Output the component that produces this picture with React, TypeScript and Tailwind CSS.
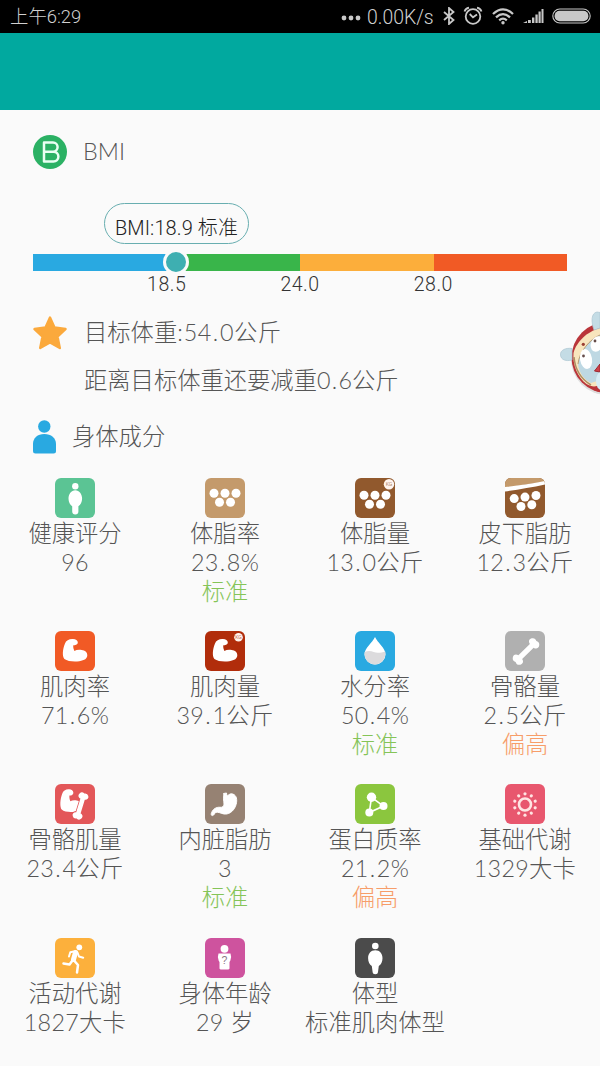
import { Fragment } from 'react';
import type { ReactNode } from 'react';

type Status = 'normal' | 'high';

interface Metric {
  name: string;
  value: string;
  status?: Status;
  tile: string;
  icon: ReactNode;
}

const ARM = 'M10 12.5C11 9.4 14.5 7.800 18 8.1c2.800.2 4.700 1.400 4.800 3.200.1 1.700-1.300 2.700-3 2.900l-1.500.1c-.3 2 .3 4.100 1.100 5.600 1.900-1 4.500-1.300 7.300-.8 3.300.5 5.500 2.100 5.600 5 .1 3.600-2.700 5.400-8 6.100-5.500.7-11.900.1-14.900-2.200C7.100 25.500 7.500 18 10 12.500Z';

const Dots = ({ points, r = 4.5 }: { points: number[][]; r?: number }) => (
  <g>
    {points.map(([x, y]) => (
      <circle key={`${x}-${y}`} cx={x} cy={y} r={r} />
    ))}
  </g>
);

const KgBadge = ({ color, cx, cy, r }: { color: string; cx: number; cy: number; r: number }) => (
  <g>
    <circle cx={cx} cy={cy} r={r} fill="#fff4ee" />
    <text x={cx} y={cy + 2} textAnchor="middle" fontSize="5.2" fontFamily="Roboto" fill={color}>KG</text>
  </g>
);

const Bone = () => (
  <path d="M-9.500-3.800A2.900 2.900 0 0 0-10.500 0 2.900 2.900 0 0 0-9.500 3.800C-7.500 5-6 3.500-5.800 1.900H5.800C6 3.500 7.500 5 9.500 3.800A2.900 2.900 0 0 0 10.500 0 2.900 2.900 0 0 0 9.500-3.800C7.500-5 6-3.500 5.800-1.900H-5.800C-6-3.500-7.500-5-9.500-3.800Z" />
);

// Gives the decimal point a little more room than Lato does
const Decimal = ({ children }: { children: string }) => (
  <>
    {children.split('.').map((part, i) => (
      <Fragment key={i}>
        {i > 0 && <span className="pr-[1.4px] pl-[1.2px]">.</span>}
        {part}
      </Fragment>
    ))}
  </>
);

const metrics: Metric[] = [
  {
    name: '健康评分',
    value: '96',
    tile: 'bg-[#5bc494]',
    icon: (
      <>
        <circle cx="20.300" cy="8.300" r="3.200" />
        <path d="M20.300 12.300c4 0 6.800 3.700 6.800 8.500 0 3.200-1.600 6-3.700 7.500V33.500c0 2-1.200 3-3.100 3s-3.100-1-3.100-3V28.300c-2.100-1.500-3.700-4.300-3.700-7.500 0-4.800 2.800-8.500 6.800-8.500Z" />
      </>
    ),
  },
  {
    name: '体脂率',
    value: '23.8%',
    status: 'normal',
    tile: 'bg-[#c49a6b]',
    icon: <Dots points={[[9, 15.2], [20, 15.2], [31, 15.2], [14.5, 24.3], [25.5, 24.3]]} />,
  },
  {
    name: '体脂量',
    value: '13.0公斤',
    tile: 'bg-[#91592d]',
    icon: (
      <>
        <Dots points={[[9, 17.2], [20, 17.2], [31, 17.2], [14.5, 26.3], [25.5, 26.3]]} />
        <KgBadge color="#91592d" cx={34} cy={6.3} r={5.2} />
      </>
    ),
  },
  {
    name: '皮下脂肪',
    value: '12.3公斤',
    tile: 'bg-[#91592d]',
    icon: (
      <>
        <path d="M0 0H40V4Q20 6 0 10Z" fill="#c49a6b" />
        <path d="M0 9C13 7.500 27 6 40 3V6.500C27 9.500 13 11.500 0 13.500Z" />
        <Dots points={[[9.2, 20.6], [20, 19.1], [31, 17.5], [16, 28.5], [26.8, 26.8]]} />
      </>
    ),
  },
  { name: '肌肉率', value: '71.6%', tile: 'bg-[#f15a25]', icon: <path d={ARM} /> },
  {
    name: '肌肉量',
    value: '39.1公斤',
    tile: 'bg-[#b12d0b]',
    icon: (
      <>
        <path d={ARM} />
        <KgBadge color="#b12d0b" cx={33.5} cy={6.3} r={4.3} />
      </>
    ),
  },
  {
    name: '水分率',
    value: '50.4%',
    status: 'normal',
    tile: 'bg-[#29a9e1]',
    icon: (
      <>
        <path d="M20 6C17.500 11.500 9.500 17 9.500 23.500a10.500 10 0 0 0 21 0C30.500 17 22.500 11.500 20 6Z" />
        <path d="M9.700 21c3-1.300 6-1.200 9 0 3.500 1.400 8 .5 11.600-.6.9 7.500-4.300 13.100-10.300 13.100S8.500 28 9.700 21Z" fill="#dcdbdd" />
      </>
    ),
  },
  {
    name: '骨骼量',
    value: '2.5公斤',
    status: 'high',
    tile: 'bg-[#b0b0b0]',
    icon: (
      <g transform="translate(21 20.5) rotate(-45) scale(1.4)">
        <Bone />
      </g>
    ),
  },
  {
    name: '骨骼肌量',
    value: '23.4公斤',
    tile: 'bg-[#e35759]',
    icon: (
      <>
        <path d={ARM} transform="translate(-1.5 -3) scale(.87 1.02)" />
        <g transform="translate(25.5 22) rotate(-73) scale(1.24 1.2)" stroke="#e35759" strokeWidth="1.3" paintOrder="stroke">
          <Bone />
        </g>
      </>
    ),
  },
  {
    name: '内脏脂肪',
    value: '3',
    status: 'normal',
    tile: 'bg-[#968273]',
    icon: (
      <path
        d="M18.500 9.500 21.500 9c.2 1.500.4 2.300 1.300 2.700 1.700-2 4.200-2.500 6.400-1 2.900 2 3.200 7 1.300 11.500-2.300 5.600-7.300 8.700-12 7.700-3.300-.8-5.700-2.300-7.700-1.500-1.600.8-1.300 2.700-3.300 3.200-1.500.1-1.500-1.800-.9-3.100 1.500-3.500 4.800-5.600 8.400-5.200 2.400.3 3.700-1 4-3.100.3-2.200-.8-3.700-.5-6 .1-1.500.5-3 0-4.700Z"
        stroke="#fff"
        strokeWidth="1"
      />
    ),
  },
  {
    name: '蛋白质率',
    value: '21.2%',
    status: 'high',
    tile: 'bg-[#8bc63e]',
    icon: (
      <>
        <path d="M16.500 13.300 28.500 22 14.300 28.600Z" fill="none" stroke="#fff" strokeWidth="1.600" />
        <circle cx="16.500" cy="13.300" r="4.700" />
        <circle cx="28.500" cy="22" r="4" />
        <circle cx="14.300" cy="28.600" r="4" />
      </>
    ),
  },
  {
    name: '基础代谢',
    value: '1329大卡',
    tile: 'bg-[#e8576e]',
    icon: (
      <g fill="#ffe4e2">
        <circle cx="20" cy="20.500" r="6" fill="none" stroke="#ffe4e2" strokeWidth="2.600" />
        {[0, 36, 72, 108, 144, 180, 216, 252, 288, 324].map((a) => (
          <circle key={a} cx="20" cy="9.800" r="1.600" transform={`rotate(${a} 20 20.500)`} />
        ))}
      </g>
    ),
  },
  {
    name: '活动代谢',
    value: '1827大卡',
    tile: 'bg-[#fcb03c]',
    icon: (
      <g fill="none" stroke="#fff" strokeLinecap="round" strokeLinejoin="round">
        <circle cx="24.300" cy="9.300" r="2.900" fill="#fff" stroke="none" />
        <path d="M20.500 14.500 18.500 21.500" strokeWidth="5" />
        <path d="M20 13.300 15.300 14.300 14 18.500M22.500 14.500 24 18.500 28.200 19.800" strokeWidth="2" />
        <path d="M19 22.500 23 27 22 34.500M17.500 22.500 14.500 26.500 8.500 25.500" strokeWidth="2.500" />
      </g>
    ),
  },
  {
    name: '身体年龄',
    value: '29 岁',
    tile: 'bg-[#ce539e]',
    icon: (
      <>
        <circle cx="19.500" cy="10.800" r="3.900" />
        <path d="M13.500 15.500H25.500Q26.800 18.500 25.300 22.800L24.500 24V30.500Q24.300 31.500 23 31.500H16Q14.700 31.500 14.500 30.500V24L13.700 22.800Q12.200 18.500 13.500 15.500Z" />
        <text x="19.500" y="25.500" textAnchor="middle" fontSize="10.500" fontFamily="Liberation Sans" fill="#8b777f">?</text>
      </>
    ),
  },
  {
    name: '体型',
    value: '标准肌肉体型',
    tile: 'bg-[#4b4b4b]',
    icon: (
      <>
        <circle cx="20.300" cy="8" r="3.300" />
        <path d="M20.300 12.300c4.500 0 7.200 3.400 7.200 8 0 3.500-1.500 6.400-3.700 7.600L23 34c-.2 1.600-1 2.200-2.700 2.200s-2.500-.6-2.700-2.200l-.8-6.100c-2.200-1.200-3.700-4.100-3.700-7.600 0-4.600 2.700-8 7.200-8Z" />
      </>
    ),
  },
];

const StatusBar = () => (
  <header className="flex h-[33px] items-center justify-between bg-black pr-2 pl-[10px] font-[Roboto,'Noto_Sans_CJK_SC',sans-serif] text-[18.4px] text-[#d0d0d0]">
    <span className="pt-px font-light">上午6:29</span>
    <div className="flex items-center">
      <svg width="20" height="20" className="mr-[6px]" fill="#c8c8c8">
        <circle cx="3" cy="12" r="2.400" />
        <circle cx="10" cy="12" r="2.400" />
        <circle cx="17" cy="12" r="2.400" />
      </svg>
      <span className="w-[67px] pt-[2px] text-[19.4px] font-light whitespace-nowrap">0.00K/s</span>
      <svg width="12" height="18" className="ml-[9px]" fill="none" stroke="#c8c8c8" strokeWidth="1.800">
        <path d="M1 5 10.500 13 6 17V1L10.500 5 1 13" />
      </svg>
      <svg width="20" height="20" className="ml-[8px]" fill="none" stroke="#c8c8c8" strokeWidth="1.800">
        <circle cx="10" cy="10.500" r="7.300" />
        <path d="M6.700 8 10 11.300 14 8.500M1.500 5.500Q2.500 2.500 6 1.700M18.500 5.500Q17.500 2.500 14 1.700" />
      </svg>
      <svg width="22" height="17" className="ml-[9px]" fill="none" stroke="#c8c8c8" strokeWidth="2.300">
        <path d="M1 6Q11-3.300 21 6M4 9.300Q11 3 18 9.300M7.200 12.300Q11 9 14.800 12.300" />
        <circle cx="11" cy="14.800" r="1.700" fill="#c8c8c8" stroke="none" />
      </svg>
      <svg width="21" height="16" className="ml-[9px]" fill="#c8c8c8">
        <path d="M0 15 4 13V15ZM5 12h2.800v3H5ZM9 9.500h2.400V15H9ZM12.400 6.500h2.300V15h-2.300ZM15.500 3.500h2.200V15h-2.200ZM18.500 1h2V15h-2Z" />
      </svg>
      <svg width="40" height="16" className="ml-[8px]">
        <rect x=".8" y="1" width="37.400" height="14" rx="7" fill="none" stroke="#c8c8c8" strokeWidth="1.100" />
        <rect x="2.600" y="2.800" width="33.800" height="10.400" rx="5" fill="#c8c8c8" />
      </svg>
    </div>
  </header>
);

const segments = [
  { color: 'bg-[#29a9e1]', limit: '18.5' },
  { color: 'bg-[#39b54a]', limit: '24.0' },
  { color: 'bg-[#fcae3b]', limit: '28.0' },
  { color: 'bg-[#f15a25]' },
];

const BmiScale = () => (
  <div className="relative mx-[33px] mt-[85px] font-[Roboto,'Noto_Sans_CJK_SC',sans-serif] font-light text-[#333]">
    <div className="absolute -top-[51px] left-[71px] flex h-[41px] w-[145px] items-center justify-center rounded-full border border-[#68aeb0] pt-[8px] text-[20px] tracking-[0.1px] whitespace-nowrap text-[#222]">
      BMI:18.9 标准
    </div>
    <div className="flex h-[17px]">
      {segments.map((s) => (
        <div key={s.color} className={`flex-1 ${s.color}`} />
      ))}
    </div>
    <div className="absolute -top-[5px] left-[130px] size-[26px] rounded-full border-3 border-[#fafafa] bg-[#3eafb1]" />
    <div className="flex h-[27px] items-center justify-around px-[67px] text-[19.5px] tracking-[0.5px]">
      {segments.filter((s) => s.limit).map((s) => (
        <span key={s.limit} className="flex-1 text-center">{s.limit}</span>
      ))}
    </div>
  </div>
);

const MetricCell = ({ name, value, status, tile, icon }: Metric) => (
  <div className="flex h-[153.2px] flex-col items-center text-[23.3px] leading-[29px] whitespace-nowrap">
    <div className={`mb-px size-10 shrink-0 overflow-hidden rounded-[6px] ${tile}`}>
      <svg viewBox="0 0 40 40" className="size-10" fill="#fff">{icon}</svg>
    </div>
    <span>{name}</span>
    <span className={/^\d/.test(value) ? 'tracking-[0.3px]' : ''}><Decimal>{value}</Decimal></span>
    {status && (
      <span className={status === 'normal' ? 'text-[#85c458]' : 'text-[#f79d69]'}>
        {status === 'normal' ? '标准' : '偏高'}
      </span>
    )}
  </div>
);

// Floating assistant, half hidden behind the right edge
const Mascot = () => (
  <svg width="42" height="86" className="absolute top-[310px] right-0">
    <circle cx="49" cy="49" r="36" fill="#dedede" />
    <circle cx="49" cy="47.500" r="35.500" fill="#ba353a" />
    <path d="M42 18C30 21 18 32 15.500 43c-1 12 4 24 13 31 5 3 9 3 13.500 1Z" fill="#f8e5bd" />
    <path d="M16 47c1 12 7 22 17 28" fill="none" stroke="#ac8d63" strokeWidth="1.500" />
    <path d="M42 25C32 29 21 42 20 54c1 10 7 16 13 19l9-3Z" fill="#bed8e3" />
    <path d="M42 25C32 29 21 42 20 54" fill="none" stroke="#b99b73" />
    <ellipse cx="28" cy="49" rx="6" ry="10" fill="#fff" transform="rotate(-10 28 49)" />
    <ellipse cx="39" cy="34" rx="6" ry="8" fill="#fff" transform="rotate(25 39 34)" />
    <circle cx="25.500" cy="46" r="1.400" fill="#654c49" />
    <circle cx="37" cy="31" r="1.400" fill="#654c49" />
    <circle cx="25.300" cy="34.300" r="1.600" fill="#9a3d31" />
    <path d="m36.500 61 5.500-7v8Z" fill="#cf4048" stroke="#9d2830" />
    <ellipse cx="43" cy="71" rx="5" ry="9" fill="#d7edf5" />
    <path d="M36 20C33 12 33 3 39 2l3 .5V18Z" fill="#c4dce5" stroke="#acc6d1" strokeWidth=".7" />
    <path d="M14 38.500C8 37.500 2 40 2.500 45S8 51.500 14 50Z" fill="#c4dce5" stroke="#acc6d1" strokeWidth=".7" />
  </svg>
);

const App = () => {
  return (
    <div className="relative h-[1066px] w-[600px] overflow-hidden bg-[#fafafa] font-[Lato,'Noto_Sans_CJK_SC',sans-serif] font-light text-[#555]">
      <StatusBar />
      <div className="h-[77px] bg-[#01a99f]" />

      <main>
        <section className="pt-[25px]">
          <div className="flex h-[34px] items-center pl-[33px] text-[23.3px]">
            <svg width="34" height="34">
              <circle cx="17" cy="17" r="17" fill="#2bb164" />
              <path d="M11 7.500H20a4.600 4.600 0 0 1 0 9.200H11ZM11 16.700H20.500a4.900 4.900 0 0 1 0 9.800H11Z" fill="none" stroke="#e9fff2" strokeWidth="2.500" strokeLinejoin="round" />
            </svg>
            <h2 className="ml-4 pb-[2px]">BMI</h2>
          </div>
          <BmiScale />
        </section>

        <section className="mt-[17px] pl-[33px] text-[23.3px]">
          <div className="flex h-[36px] items-center">
            <svg width="34" height="34">
              <path d="M17 1.500 21.500 11.500 32.500 13 24.500 20.500 26.800 32 17 26.500 7.200 32 9.500 20.500 1.500 13 12.500 11.500Z" fill="#fba93c" stroke="#fba93c" strokeWidth="2.400" strokeLinejoin="round" />
            </svg>
            <span className="ml-[17px] pb-[2px]">
              目标体重<span className="pr-px">:</span>
              <span className="tracking-[0.4px]"><Decimal>54.0公斤</Decimal></span>
            </span>
          </div>
          <p className="mt-[11px] mb-[22px] ml-[51px] h-[36px] leading-[36px]"><Decimal>距离目标体重还要减重0.6公斤</Decimal></p>
          <div className="flex h-[34px] items-center">
            <svg width="24" height="34" fill="#29a9e1">
              <circle cx="11.300" cy="6.500" r="6.200" />
              <path d="M0 24C0 18 4.500 14 11.300 14S23 18 23 24v7q0 2.500-2.500 2.500H2.500Q0 33.500 0 31Z" />
            </svg>
            <h2 className="ml-[15px] pb-px">身体成分</h2>
          </div>
        </section>

        <section className="mt-[24px] grid grid-cols-4">
          {metrics.map((m) => (
            <MetricCell key={m.name} {...m} />
          ))}
        </section>
      </main>

      <Mascot />
    </div>
  );
};

export default App;
